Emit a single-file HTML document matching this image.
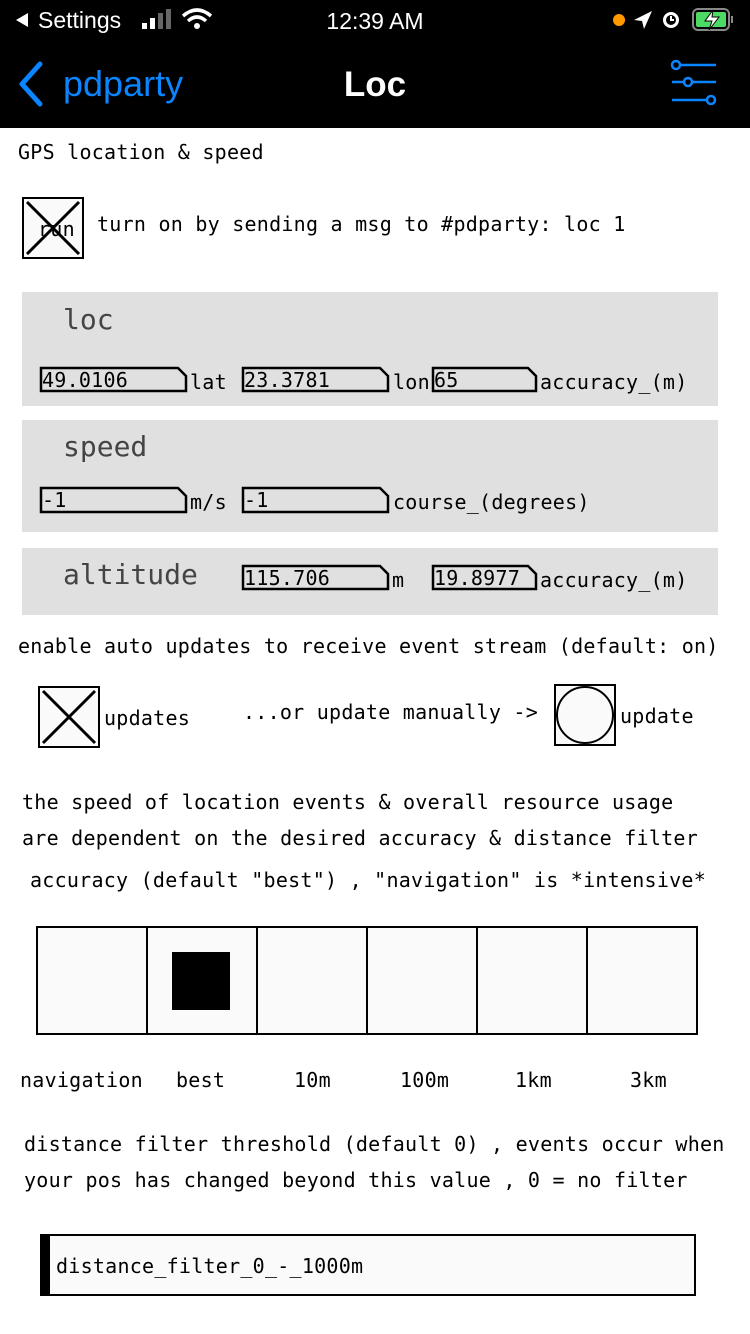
<!DOCTYPE html>
<html><head><meta charset="utf-8"><style>
html,body{margin:0;padding:0;width:750px;height:1334px;overflow:hidden;background:#fff}
svg{display:block}
.m{font-family:"DejaVu Sans Mono","Liberation Mono",monospace;font-size:20px;fill:#000;letter-spacing:0.25px}
.b{font-family:"DejaVu Sans Mono","Liberation Mono",monospace;font-size:28px;fill:#444}
.s{font-family:"Liberation Sans",sans-serif}
</style></head><body>
<svg width="750" height="1334" viewBox="0 0 750 1334" xmlns="http://www.w3.org/2000/svg">
<rect x="0" y="0" width="750" height="128" fill="#000"/>
<path d="M28 13 L16 20 L28 27 Z" fill="#fff"/>
<text x="38" y="28" class="s" font-size="23" fill="#fff">Settings</text>
<rect x="142" y="23" width="5" height="6" fill="#fff"/><rect x="150" y="18" width="5" height="11" fill="#fff"/><rect x="158" y="13" width="5" height="16" fill="#666"/><rect x="166" y="9" width="5" height="20" fill="#666"/>
<path d="M183 16 Q197 4 211 16" stroke="#fff" stroke-width="3.5" fill="none"/><path d="M188 21 Q197 13 206 21" stroke="#fff" stroke-width="3.5" fill="none"/><circle cx="197" cy="26" r="3" fill="#fff"/>
<text x="375" y="29" class="s" font-size="23" fill="#fff" text-anchor="middle">12:39 AM</text>
<circle cx="619" cy="20" r="6" fill="#f90"/>
<path d="M634 20 L652 11 L644 29 L642 21 Z" fill="#fff"/>
<circle cx="671" cy="20" r="8" fill="#fff"/><circle cx="671" cy="20" r="5" fill="#000"/><path d="M671 16v4h3" stroke="#fff" stroke-width="2" fill="none"/>
<rect x="693" y="9" width="36" height="21" rx="5" fill="none" stroke="#888" stroke-width="2"/><rect x="696" y="12" width="30" height="15" rx="2" fill="#4cd964"/><rect x="731" y="16" width="2" height="7" fill="#888"/>
<path d="M713 10 L705 21 H712 L709 30 L719 17 H712 Z" fill="#fff" stroke="#000" stroke-width="1"/>
<path d="M40 64 L22 84 L40 104" stroke="#0a84ff" stroke-width="5" fill="none" stroke-linecap="round" stroke-linejoin="round"/>
<text x="63" y="96" class="s" font-size="36" fill="#0a84ff">pdparty</text>
<text x="375" y="96" class="s" font-size="35" font-weight="bold" fill="#fff" text-anchor="middle">Loc</text>
<g stroke="#0a84ff" stroke-width="2.5" fill="none"><circle cx="676" cy="65" r="4"/><line x1="680" y1="65" x2="716" y2="65"/><line x1="672" y1="82" x2="684" y2="82"/><circle cx="688" cy="82" r="4"/><line x1="692" y1="82" x2="716" y2="82"/><line x1="672" y1="100" x2="706" y2="100"/><circle cx="711" cy="100" r="4"/></g>
<text x="18" y="159" class="m">GPS location &amp; speed</text>
<rect x="23" y="198" width="60" height="60" fill="#fafafa" stroke="#000" stroke-width="2"/>
<text x="38" y="236" class="m">run</text>
<path d="M27 202 L79 254 M79 202 L27 254" stroke="#000" stroke-width="3"/>
<text x="97" y="231" class="m">turn on by sending a msg to #pdparty: loc 1</text>
<rect x="22" y="292" width="696" height="114" fill="#e0e0e0"/>
<text x="63" y="329" class="b">loc</text>
<g fill="#e0e0e0" stroke="#000" stroke-width="2.5">
<path d="M41 368 H178 L186 376 V391 H41 Z"/>
<path d="M243 368 H380 L388 376 V391 H243 Z"/>
<path d="M433 368 H528 L536 376 V391 H433 Z"/>
</g>
<text x="42" y="387" class="m">49.0106</text><text x="190" y="389" class="m">lat</text>
<text x="244" y="387" class="m">23.3781</text><text x="393" y="389" class="m">lon</text>
<text x="434" y="387" class="m">65</text><text x="540" y="389" class="m">accuracy_(m)</text>
<rect x="22" y="420" width="696" height="112" fill="#e0e0e0"/>
<text x="63" y="456" class="b">speed</text>
<g fill="#e0e0e0" stroke="#000" stroke-width="2.5">
<path d="M41 488 H178 L186 496 V512 H41 Z"/>
<path d="M243 488 H380 L388 496 V512 H243 Z"/>
</g>
<text x="42" y="507" class="m">-1</text><text x="190" y="509" class="m">m/s</text>
<text x="244" y="507" class="m">-1</text><text x="393" y="509" class="m">course_(degrees)</text>
<rect x="22" y="548" width="696" height="67" fill="#e0e0e0"/>
<text x="63" y="584" class="b">altitude</text>
<g fill="#e0e0e0" stroke="#000" stroke-width="2.5">
<path d="M243 566 H380 L388 574 V589 H243 Z"/>
<path d="M433 566 H528 L536 574 V589 H433 Z"/>
</g>
<text x="244" y="585" class="m">115.706</text><text x="392" y="587" class="m">m</text>
<text x="434" y="585" class="m">19.8977</text><text x="540" y="587" class="m">accuracy_(m)</text>
<text x="18" y="653" class="m">enable auto updates to receive event stream (default: on)</text>
<rect x="39" y="687" width="60" height="60" fill="#fafafa" stroke="#000" stroke-width="2"/>
<path d="M43 691 L95 743 M95 691 L43 743" stroke="#000" stroke-width="3"/>
<text x="104" y="725" class="m">updates</text>
<text x="243" y="719" class="m">...or update manually -&gt;</text>
<rect x="555" y="685" width="60" height="60" fill="#fafafa" stroke="#000" stroke-width="2"/>
<circle cx="585" cy="715" r="28" fill="#fafafa" stroke="#000" stroke-width="2"/>
<text x="620" y="723" class="m">update</text>
<text x="22" y="809" class="m">the speed of location events &amp; overall resource usage</text>
<text x="22" y="845" class="m">are dependent on the desired accuracy &amp; distance filter</text>
<text x="30" y="887" class="m">accuracy (default "best") , "navigation" is *intensive*</text>
<g fill="#fafafa" stroke="#000" stroke-width="2">
<rect x="37" y="927" width="110" height="107"/><rect x="147" y="927" width="110" height="107"/><rect x="257" y="927" width="110" height="107"/><rect x="367" y="927" width="110" height="107"/><rect x="477" y="927" width="110" height="107"/><rect x="587" y="927" width="110" height="107"/>
</g>
<rect x="172" y="952" width="58" height="58" fill="#000"/>
<text x="20" y="1087" class="m">navigation</text>
<text x="176" y="1087" class="m">best</text>
<text x="294" y="1087" class="m">10m</text>
<text x="400" y="1087" class="m">100m</text>
<text x="515" y="1087" class="m">1km</text>
<text x="630" y="1087" class="m">3km</text>
<text x="24" y="1151" class="m">distance filter threshold (default 0) , events occur when</text>
<text x="24" y="1187" class="m">your pos has changed beyond this value , 0 = no filter</text>
<rect x="41" y="1235" width="654" height="60" fill="#fafafa" stroke="#000" stroke-width="2"/>
<rect x="42" y="1236" width="8" height="58" fill="#000"/>
<text x="56" y="1273" class="m">distance_filter_0_-_1000m</text>
</svg>
</body></html>
